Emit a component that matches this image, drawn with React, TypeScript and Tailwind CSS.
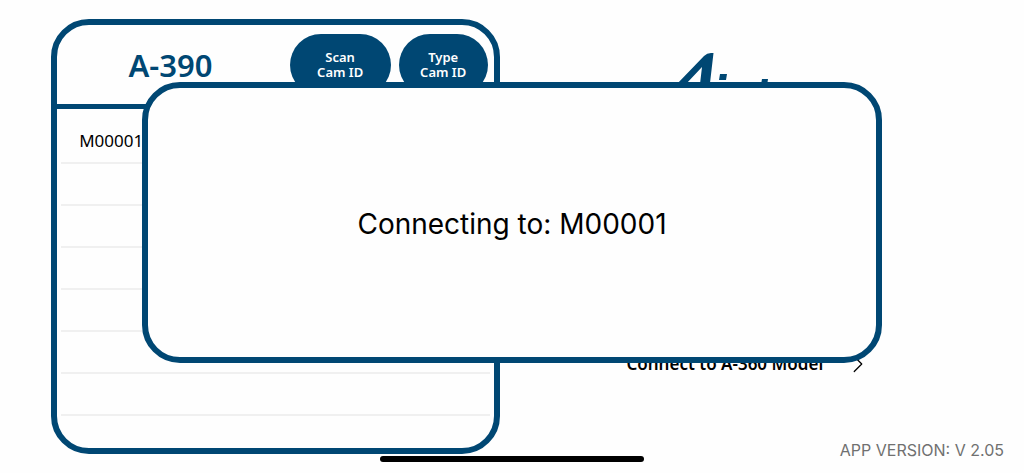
import { ChevronRight } from "lucide-react";

const cameras = ["M00001", "", "", "", "", "", "", ""];

function Logo() {
  return (
    <svg viewBox="0 0 148 60" className="h-[60px] w-[148px] fill-[#004773]" role="img" aria-label="Logo">
      <path d="M0 32 L28 3 Q31 0 35 0 L37.500 0 L34 30 L30 60 L22 60 L25 42 L14 42 L8 60 L0 60 Z M10 31 L24 31 L26 14 Z" fillRule="evenodd" />
      <path d="M44 21 L51 21 L50 27 L43 27 Z M42 33 L49 33 L44 60 L37 60 Z" />
      <path d="M86 26 L92 26 L87 60 L80 60 Z" />
    </svg>
  );
}

function PillButton({ top, className }: { top: string; className: string }) {
  return (
    <button
      type="button"
      className={`h-[62px] rounded-full bg-[#004773] text-[13px] leading-[15px] font-semibold text-white ${className}`}
    >
      {top}
      <br />
      Cam ID
    </button>
  );
}

export default function App() {
  return (
    <div className="relative flex min-h-screen flex-col bg-[#fefefe] font-['Noto_Sans',sans-serif] text-black">
      <main className="flex flex-1 items-start pt-[19px] pl-[5%]">
        <section className="w-[46.100%] rounded-[38px] border-6 border-[#004773]">
          <header className="flex h-[84px] items-start border-b-5 border-[#004773] pt-[9px] pr-1.5">
            <h1 className="flex-1 pt-[11px] pr-1.5 text-center text-[31px] leading-10 font-semibold text-[#004773]">A-390</h1>
            <div className="flex gap-2">
              <PillButton top="Scan" className="w-[101px]" />
              <PillButton top="Type" className="w-[89px]" />
            </div>
          </header>
          <ul className="px-1 pt-[13px]">
            {cameras.map((name, i) => (
              <li
                key={i}
                className="h-[42px] border-b-2 border-[#f0f0f0] px-[18px] text-[17px] leading-[38px] last:h-8 last:border-b-0"
              >
                {name}
              </li>
            ))}
          </ul>
        </section>
        <aside className="flex flex-1 flex-col items-center pt-[34px] pr-6">
          <Logo />
          <a href="#a-360" className="mt-[236px] flex items-center gap-5 text-[17px] leading-6 font-semibold">
            Connect to A-360 Model
            <ChevronRight className="size-[30px]" strokeWidth={1} />
          </a>
        </aside>
      </main>
      <footer className="absolute right-5 bottom-[13px] font-[Inter,sans-serif] text-base leading-5 text-[#707070]">
        APP VERSION: V 2.05
      </footer>
      <div className="absolute inset-x-0 bottom-[11px] mx-auto h-1.5 w-[264px] rounded-full bg-black" />
      <div className="fixed inset-0 flex items-center justify-center pb-7">
        <div
          role="dialog"
          aria-modal="true"
          aria-labelledby="status"
          className="flex h-[281px] w-[72.300%] items-center justify-center rounded-[38px] border-6 border-[#004773] bg-[#fefefe]"
        >
          <p id="status" className="pt-0.5 font-[Inter,sans-serif] text-[28px] leading-9">
            Connecting to: M00001
          </p>
        </div>
      </div>
    </div>
  );
}
